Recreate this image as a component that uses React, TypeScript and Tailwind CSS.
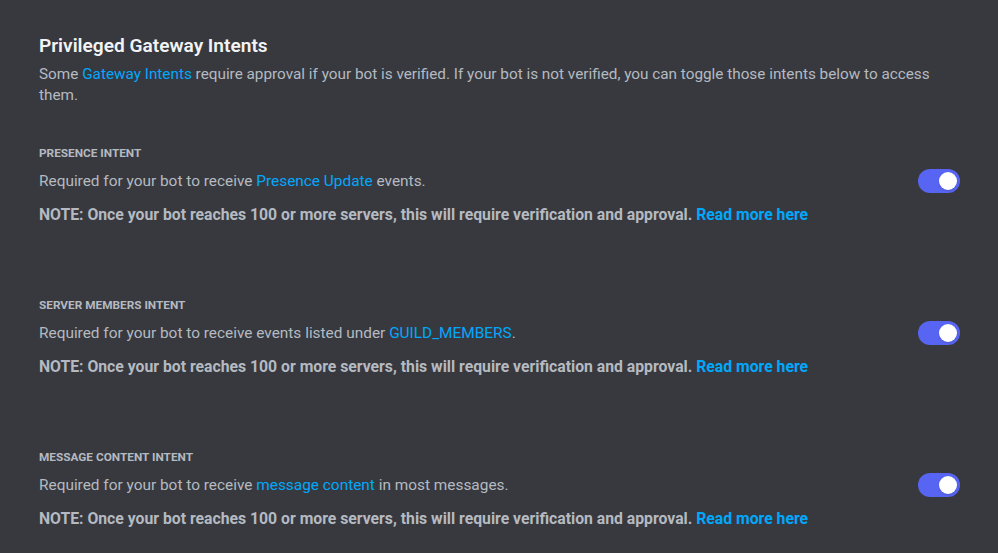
import { useState } from 'react';

const intents = [
  {
    title: 'PRESENCE INTENT',
    before: 'Required for your bot to receive ',
    link: 'Presence Update',
    after: ' events.',
  },
  {
    title: 'SERVER MEMBERS INTENT',
    before: 'Required for your bot to receive events listed under ',
    link: 'GUILD_MEMBERS',
    after: '.',
  },
  {
    title: 'MESSAGE CONTENT INTENT',
    before: 'Required for your bot to receive ',
    link: 'message content',
    after: ' in most messages.',
  },
];

function Toggle({ on, onClick }: { on: boolean; onClick: () => void }) {
  return (
    <button
      onClick={onClick}
      className={`relative h-6 w-[42px] shrink-0 rounded-full transition-colors ${on ? 'bg-[#5865f2]' : 'bg-[#80848e]'}`}
    >
      <span
        className={`absolute top-[3px] h-[18px] w-[18px] rounded-full bg-white shadow transition-all ${on ? 'left-[21px]' : 'left-[3px]'}`}
      />
    </button>
  );
}

export default function App() {
  const [enabled, setEnabled] = useState([true, true, true]);

  return (
    <div className="min-h-screen bg-[#37393f] px-[39px] pt-[34px] font-['Roboto',sans-serif]">
      <div className="w-[921px]">
        <h2 className="text-[19.1px] font-semibold leading-6 text-[#f2f3f5]">Privileged Gateway Intents</h2>
        <p className="mt-[6px] text-[15.3px] leading-[21px] text-[#b5bac1]">
          Some <span className="text-[#00a8fc]">Gateway Intents</span> require approval if your bot is verified. If your
          bot is not verified, you can toggle those intents below to access them.
        </p>

        <div className="mt-[39px] flex flex-col gap-[72px]">
          {intents.map((intent, i) => (
            <div key={i}>
              <h3 className="text-[11.8px] font-bold leading-4 text-[#b5bac1]">{intent.title}</h3>
              <div className="mt-[8px] flex items-center justify-between">
                <p className="text-[15.4px] leading-5 text-[#b5bac1]">
                  {intent.before}
                  <span className="text-[#00a8fc]">{intent.link}</span>
                  {intent.after}
                </p>
                <Toggle
                  on={enabled[i]}
                  onClick={() => setEnabled(enabled.map((v, j) => (j === i ? !v : v)))}
                />
              </div>
              <p className="mt-[12px] text-[15.75px] font-bold leading-5 text-[#b5bac1]">
                NOTE: Once your bot reaches 100 or more servers, this will require verification and approval.{' '}
                <span className="text-[#00a8fc]">Read more here</span>
              </p>
            </div>
          ))}
        </div>
      </div>
    </div>
  );
}
